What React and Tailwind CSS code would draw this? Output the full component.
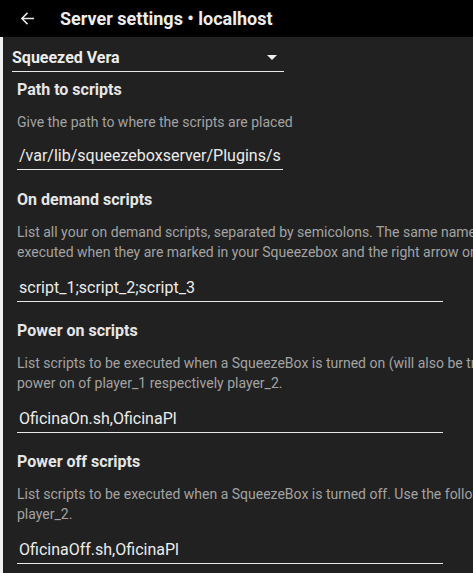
import React from "react";

function Field({ title, lines, value, lineWidth, inputGap }) {
  return (
    <div className="flex flex-col">
      <div className="text-[16px] font-bold text-[#e6e6e6] leading-[20px] h-[20px] whitespace-nowrap">{title}</div>
      <div className="mt-[12px] text-[14px] text-[#a3a3a3] leading-[20px] whitespace-nowrap">
        {lines.map((l, i) => (
          <div key={i}>{l}</div>
        ))}
      </div>
      <div className={`${inputGap} text-[16px] text-[#ececec] leading-[22px] pl-[2px] whitespace-nowrap overflow-hidden`} style={{ width: lineWidth }}>
        {value}
      </div>
      <div className="mt-[2px] h-px bg-[#e8e8e8]" style={{ width: lineWidth }} />
    </div>
  );
}

export default function App() {
  return (
    <div className="w-[473px] h-[573px] overflow-hidden bg-[#212121] flex flex-col" style={{ fontFamily: "Roboto, 'Noto Sans', sans-serif" }}>
      <div className="h-[37px] bg-black flex items-center shrink-0">
        <svg className="ml-[20px]" width="15" height="15" viewBox="0 0 16 16" fill="none" stroke="#e8e8e8" strokeWidth="1.6">
          <path d="M15 8H2M8 2L2 8l6 6" />
        </svg>
        <div className="ml-[25px] text-[18px] font-bold text-[#ededed] whitespace-nowrap">Server settings • localhost</div>
      </div>
      <div className="flex-1 flex border-l-[3px] border-[#f0f0f0]">
        <div className="flex flex-col pl-[9px] pt-[10px]">
          <div className="w-[272px] flex items-center justify-between h-[22px]">
            <span className="text-[16px] font-bold text-[#ececec]">Squeezed Vera</span>
            <svg width="10" height="6" viewBox="0 0 10 6" className="mr-[7px]">
              <path d="M0 0h10L5 5z" fill="#f0f0f0" />
            </svg>
          </div>
          <div className="mt-[2px] w-[272px] h-px bg-[#e8e8e8]" />
          <div className="pl-[5px] flex flex-col">
            <div className="mt-[8px]">
              <Field
                title="Path to scripts"
                lines={["Give the path to where the scripts are placed"]}
                value="/var/lib/squeezeboxserver/Plugins/s"
                lineWidth="266px"
                inputGap="mt-[13px]"
              />
            </div>
            <div className="mt-[20px]">
              <Field
                title="On demand scripts"
                lines={[
                  "List all your on demand scripts, separated by semicolons. The same names will be",
                  "executed when they are marked in your Squeezebox and the right arrow on the remote",
                ]}
                value="script_1;script_2;script_3"
                lineWidth="426px"
                inputGap="mt-[15px]"
              />
            </div>
            <div className="mt-[19px]">
              <Field
                title="Power on scripts"
                lines={[
                  "List scripts to be executed when a SqueezeBox is turned on (will also be triggered on",
                  "power on of player_1 respectively player_2.",
                ]}
                value="OficinaOn.sh,OficinaPl"
                lineWidth="426px"
                inputGap="mt-[15px]"
              />
            </div>
            <div className="mt-[19px]">
              <Field
                title="Power off scripts"
                lines={[
                  "List scripts to be executed when a SqueezeBox is turned off. Use the following for",
                  "player_2.",
                ]}
                value="OficinaOff.sh,OficinaPl"
                lineWidth="426px"
                inputGap="mt-[15px]"
              />
            </div>
          </div>
        </div>
      </div>
    </div>
  );
}
